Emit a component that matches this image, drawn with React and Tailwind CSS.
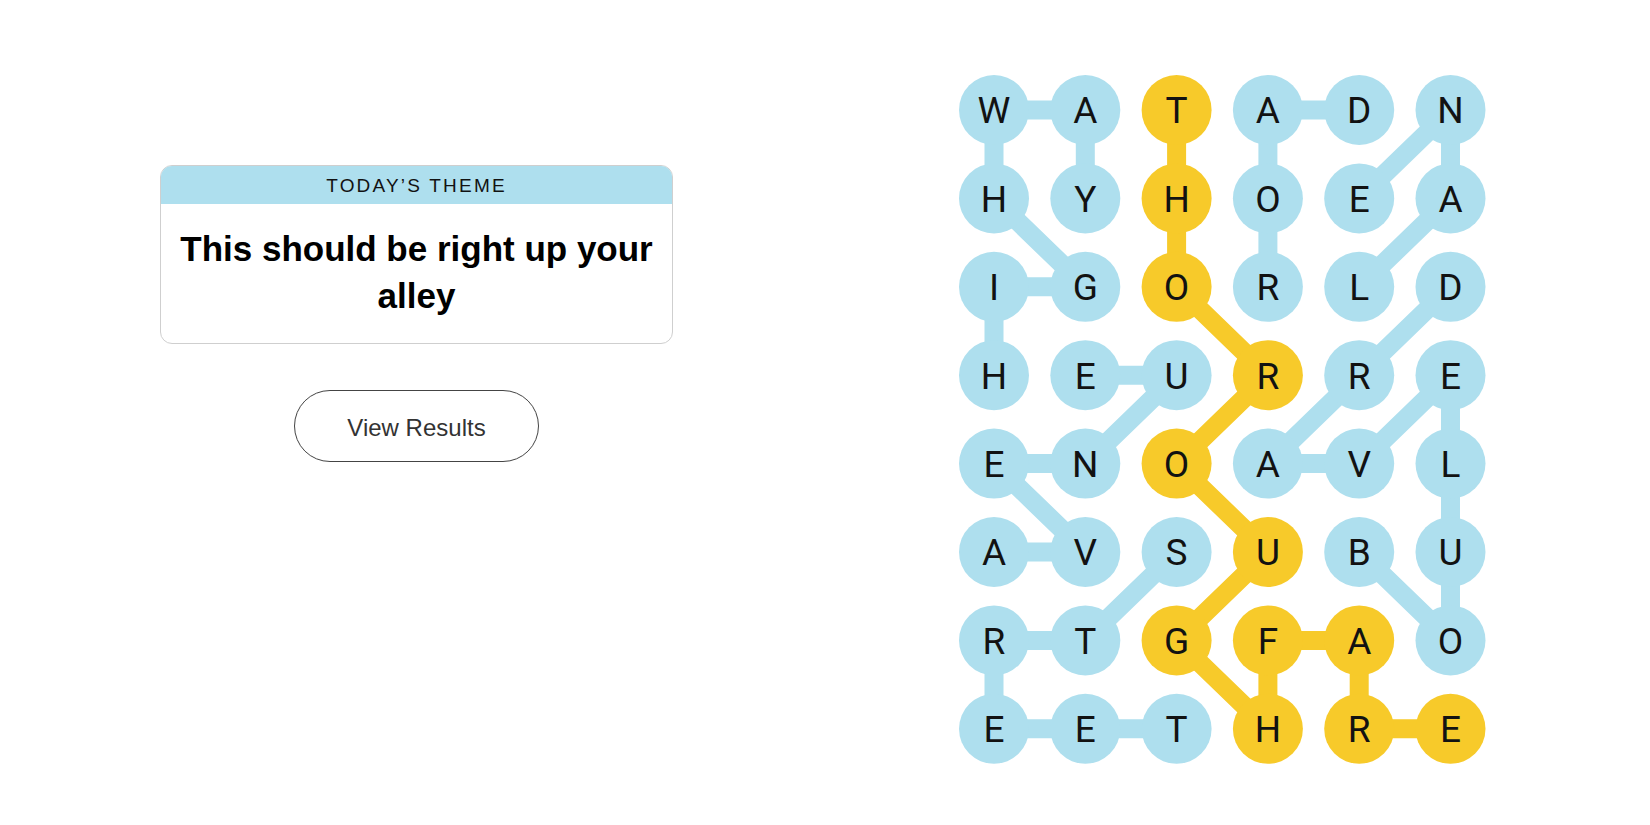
const GRID = [
  'WATADN',
  'HYHOEA',
  'IGORLD',
  'HEURRE',
  'ENOAVL',
  'AVSUBU',
  'RTGFAO',
  'EETHRE',
];

const BLUE = '#aedfee';
const YELLOW = '#f7ca2a';

// found words, as [row, col] paths
const WORDS = [
  { color: BLUE, path: [[3, 0], [2, 0], [2, 1], [1, 0], [0, 0], [0, 1], [1, 1]] },
  { color: BLUE, path: [[5, 0], [5, 1], [4, 0], [4, 1], [3, 2], [3, 1]] },
  { color: BLUE, path: [[5, 2], [6, 1], [6, 0], [7, 0], [7, 1], [7, 2]] },
  { color: BLUE, path: [[2, 3], [1, 3], [0, 3], [0, 4]] },
  { color: BLUE, path: [[2, 4], [1, 5], [0, 5], [1, 4]] },
  { color: BLUE, path: [[5, 4], [6, 5], [5, 5], [4, 5], [3, 5], [4, 4], [4, 3], [3, 4], [2, 5]] },
  {
    color: YELLOW,
    path: [[0, 2], [1, 2], [2, 2], [3, 3], [4, 2], [5, 3], [6, 2], [7, 3], [6, 3], [6, 4], [7, 4], [7, 5]],
  },
];

const R = 35;
const COL = 91.3;
const ROW = 88.4;
const cx = (c) => R + c * COL;
const cy = (r) => R + r * ROW;

function colorAt(r, c) {
  const w = WORDS.find((w) => w.path.some(([pr, pc]) => pr === r && pc === c));
  return w ? w.color : '#ffffff';
}

function Board() {
  const width = R * 2 + COL * 5;
  const height = R * 2 + ROW * 7;
  return (
    <svg width={width} height={height} viewBox={`0 0 ${width} ${height}`}>
      {WORDS.map((w, i) => (
        <polyline
          key={i}
          points={w.path.map(([r, c]) => `${cx(c)},${cy(r)}`).join(' ')}
          fill="none"
          stroke={w.color}
          strokeWidth="19"
          strokeLinejoin="round"
        />
      ))}
      {GRID.map((row, r) =>
        row.split('').map((letter, c) => (
          <g key={`${r}-${c}`}>
            <circle cx={cx(c)} cy={cy(r)} r={R} fill={colorAt(r, c)} />
            <text
              x={cx(c)}
              y={cy(r) + 1}
              textAnchor="middle"
              dominantBaseline="central"
              fontFamily="Roboto, 'Liberation Sans', sans-serif"
              fontSize="37"
              fill="#121212"
            >
              {letter}
            </text>
          </g>
        )),
      )}
    </svg>
  );
}

export default function App() {
  return (
    <div className="flex h-[825px] w-[1650px] items-start bg-white font-['Liberation_Sans',sans-serif] text-[#121212]">
      <div className="ml-[160px] flex w-[513px] flex-col items-center pt-[165px]">
        <div className="w-full overflow-hidden rounded-[12px] border border-[#cfcfcf]">
          <div className="flex h-[38px] items-center justify-center bg-[#aedfee] pt-[3px] text-[19px] uppercase tracking-[2.2px]">
            Today’s Theme
          </div>
          <div className="px-[16px] pb-[24px] pt-[21px] text-center text-[35px] font-bold leading-[47px] text-black">
            This should be right up your alley
          </div>
        </div>
        <button
          type="button"
          className="mt-[46px] h-[72px] w-[245px] rounded-full border border-[#444] pt-[4px] text-[24px] text-[#333]"
        >
          View Results
        </button>
      </div>
      <div className="ml-[286px] pt-[75px]">
        <Board />
      </div>
    </div>
  );
}
